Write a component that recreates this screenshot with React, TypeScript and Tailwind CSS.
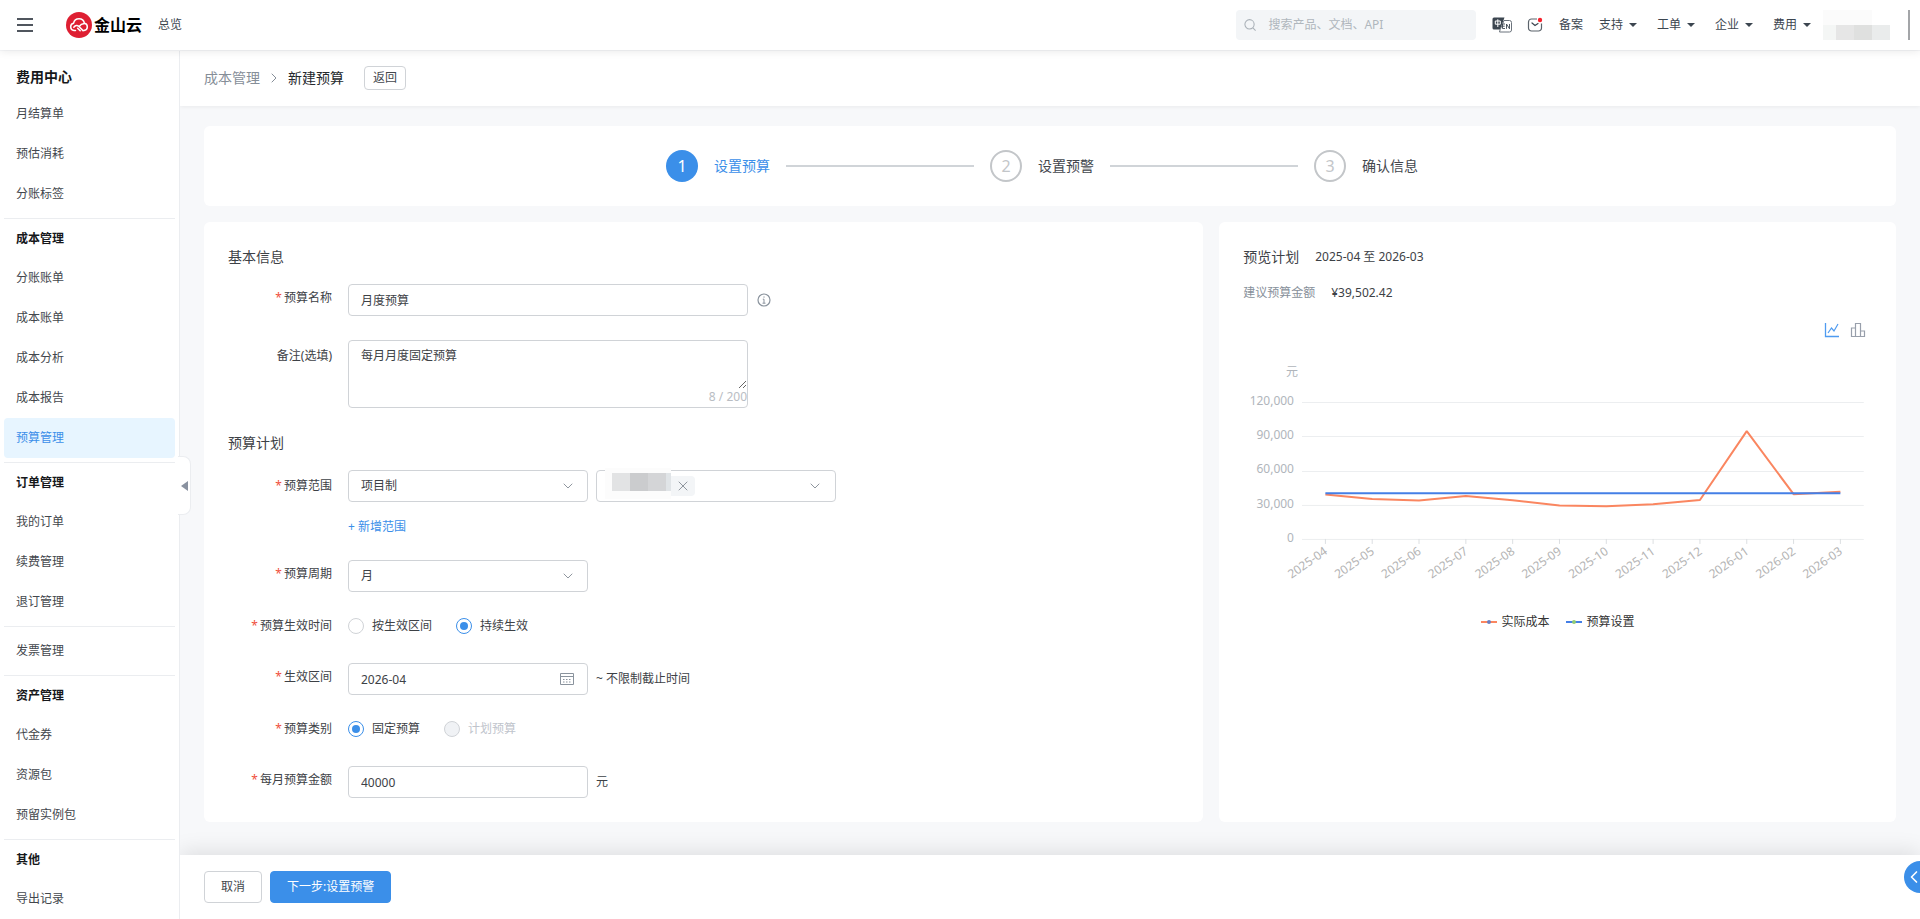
import { useState } from 'react';
import type { ReactNode } from 'react';
import { ChevronDown, ChevronLeft, ChevronRight, X } from 'lucide-react';
import clsx from 'clsx';

interface MenuGroup {
  title?: string;
  items: string[];
}

const MENU_GROUPS: MenuGroup[] = [
  { title: '成本管理', items: ['分账账单', '成本账单', '成本分析', '成本报告', '预算管理'] },
  { title: '订单管理', items: ['我的订单', '续费管理', '退订管理'] },
  { items: ['发票管理'] },
  { title: '资产管理', items: ['代金券', '资源包', '预留实例包'] },
  { title: '其他', items: ['导出记录'] },
];

const TOP_ITEMS = ['月结算单', '预估消耗', '分账标签'];
const NAV_MENUS = ['支持', '工单', '企业', '费用'];
const STEPS = ['设置预算', '设置预警', '确认信息'];

const BUDGET = 40000;
const COSTS = [
  { month: '2025-04', value: 38900 },
  { month: '2025-05', value: 34900 },
  { month: '2025-06', value: 33700 },
  { month: '2025-07', value: 37700 },
  { month: '2025-08', value: 34000 },
  { month: '2025-09', value: 29300 },
  { month: '2025-10', value: 28700 },
  { month: '2025-11', value: 30400 },
  { month: '2025-12', value: 34100 },
  { month: '2026-01', value: 94500 },
  { month: '2026-02', value: 39200 },
  { month: '2026-03', value: 41300 },
];

function Logo() {
  return (
    <svg viewBox="0 0 26 26" className="h-[26px] w-[26px]" aria-hidden="true">
      <circle cx="13" cy="13" r="13" fill="#de1f32" />
      <path
        d="M9.500 18.500H8a3.700 3.700 0 0 1-.4-7.300 5.500 5.500 0 0 1 10.800 0 3.700 3.700 0 0 1-.4 7.300h-.8M7.800 15.200c1.600-2 3.600-2.200 5.400-.4l3.800 3.800M18 11.800c-2-.2-3.400.8-4.600 2.400M11.600 16.200l2.600 2.600"
        fill="none"
        stroke="#fff"
        strokeWidth="1.500"
        strokeLinecap="round"
        strokeLinejoin="round"
      />
    </svg>
  );
}

function LanguageIcon() {
  return (
    <svg viewBox="0 0 20 16" className="h-4 w-5" aria-hidden="true">
      <path d="M2 .5h10.500L8.200 12.500H2A1.500 1.500 0 0 1 .5 11V2A1.500 1.500 0 0 1 2 .5z" fill="#3c4650" />
      <path d="M3.300 4h5v3.200h-5zM5.800 2.300V10" fill="none" stroke="#fff" strokeWidth="1" />
      <path d="M12 3.500h5.500A2 2 0 0 1 19.500 5.500v7.500a2 2 0 0 1-2 2H7.500L8.200 12.500z" fill="#fff" stroke="#6b737c" strokeWidth="1" />
      <path d="M13 7h-2.500v4.500H13M10.500 9.200h2.200M14.500 11.800V7l3 4.800V7" fill="none" stroke="#3c4650" strokeWidth=".9" />
    </svg>
  );
}

function MessageIcon() {
  return (
    <svg viewBox="0 0 16 16" className="h-4 w-4" aria-hidden="true">
      <path d="M10 2H4.500A3 3 0 0 0 1.500 5v6a3 3 0 0 0 3 3h7a3 3 0 0 0 3-3V6.500" fill="none" stroke="#5b636b" strokeWidth="1.200" />
      <path d="M5 6l3 2.500L11 6.500" fill="none" stroke="#3c4650" strokeWidth="1.200" strokeLinecap="round" />
      <circle cx="13" cy="3" r="2.200" fill="#f5222d" />
    </svg>
  );
}

function Header() {
  return (
    <header className="relative z-20 flex h-[50px] shrink-0 items-center bg-white pr-[10px] pl-4 shadow-[0_2px_8px_rgba(0,0,0,0.08)]">
      <button type="button" aria-label="菜单" className="flex h-4 w-[17px] flex-col justify-between py-px pl-px">
        <span className="h-[2px] w-full bg-[#50565e]" />
        <span className="h-[2px] w-full bg-[#50565e]" />
        <span className="h-[2px] w-full bg-[#50565e]" />
      </button>
      <a href="#" className="ml-[33px] flex items-center gap-[2px]">
        <Logo />
        <span className="text-base font-bold text-black">金山云</span>
      </a>
      <a href="#" className="ml-4 text-xs text-[#3c4650]">总览</a>

      <div className="ml-auto flex items-center">
        <label className="flex h-[30px] w-60 items-center gap-3 rounded bg-[#f3f5f7] px-2">
          <svg viewBox="0 0 14 14" className="h-[14px] w-[14px]" fill="none" stroke="#a9b0b7" strokeWidth="1.200">
            <circle cx="6.200" cy="6.200" r="5.200" />
            <path d="M10 10.200l3 3" />
          </svg>
          <input
            type="search"
            aria-label="搜索"
            placeholder="搜索产品、文档、API"
            className="w-full bg-transparent text-xs outline-none placeholder:text-[#b0b7bd]"
          />
        </label>
        <button type="button" aria-label="切换语言" className="ml-4"><LanguageIcon /></button>
        <button type="button" aria-label="消息" className="ml-[15px]"><MessageIcon /></button>
        <a href="#" className="ml-4 text-xs text-[#3c4650]">备案</a>
        <nav className="ml-4 flex items-center gap-5">
          {NAV_MENUS.map(menu => (
            <button key={menu} type="button" className="flex items-center gap-[6px] text-xs text-[#3c4650]">
              {menu}
              <span className="border-x-4 border-t-4 border-x-transparent border-t-[#3c4650]" />
            </button>
          ))}
        </nav>
        {/* masked account name */}
        <div className="ml-3 flex h-[30px] w-[67px] flex-col" aria-hidden="true">
          <div className="flex flex-1">
            <span className="w-[49px] bg-[#fbfbfb]" />
          </div>
          <div className="flex flex-1">
            <span className="w-[13px] bg-[#f4f6f5]" />
            <span className="w-[18px] bg-[#e6e6e6]" />
            <span className="w-[18px] bg-[#dfe0df]" />
            <span className="w-[18px] bg-[#eaecec]" />
          </div>
        </div>
        <span className="ml-[18px] h-[30px] w-[2px] bg-[#a3a5a8]" />
      </div>
    </header>
  );
}

function MenuItem({ label, active }: { label: string; active?: boolean }) {
  return (
    <a
      href="#"
      className={clsx(
        'flex h-10 items-center rounded px-3 text-xs',
        active ? 'bg-[#e7f5ff] text-[#3b8fe9]' : 'text-[#43474d]'
      )}
    >
      {label}
    </a>
  );
}

function Sidebar() {
  return (
    <aside className="relative z-10 w-[180px] shrink-0 border-r border-[#ebedf0] bg-white">
      <nav className="h-full overflow-y-auto pr-1 pl-1 [scrollbar-width:none]">
        <h2 className="px-3 pt-4 pb-2 text-sm leading-[19px] font-bold text-[#16181b]">费用中心</h2>
        <div className="pb-1">
          {TOP_ITEMS.map(item => <MenuItem key={item} label={item} />)}
        </div>
        {MENU_GROUPS.map((group, i) => (
          <div key={i} className={clsx('border-t border-[#ebedf0]', i < MENU_GROUPS.length - 1 && 'pb-1', !group.title && 'pt-1')}>
            {group.title && (
              <h3 className="px-3 text-xs leading-[39px] font-bold text-[#16181b]">{group.title}</h3>
            )}
            {group.items.map(item => (
              <MenuItem key={item} label={item} active={item === '预算管理'} />
            ))}
          </div>
        ))}
      </nav>
      <button
        type="button"
        aria-label="收起侧栏"
        className="absolute top-[405px] -right-3 flex h-[59px] w-[13px] items-center justify-center rounded-r-lg border border-l-0 border-[#ebedf0] bg-white"
      >
        <span className="border-y-[5px] border-r-[7px] border-y-transparent border-r-[#8a92a0]" />
      </button>
    </aside>
  );
}

function Steps({ current }: { current: number }) {
  return (
    <ol className="flex h-20 items-center justify-center rounded-md bg-white">
      {STEPS.map((step, i) => (
        <li key={step} className="mr-4 flex items-center gap-4">
          <span
            className={clsx(
              'flex h-8 w-8 items-center justify-center rounded-full text-base',
              i === current ? 'bg-[#3b8fe9] text-white' : 'border-2 border-[#c3c6c9] text-[#c3c6c9]'
            )}
          >
            {i + 1}
          </span>
          <span className={clsx('text-sm', i === current ? 'text-[#3b8fe9]' : 'text-[#43474d]')}>{step}</span>
          {i < STEPS.length - 1 && <span className="h-[2px] w-[188px] bg-[#d0d4d8]" />}
        </li>
      ))}
    </ol>
  );
}

interface FieldProps {
  label: string;
  htmlFor?: string;
  required?: boolean;
  className?: string;
  labelClass?: string;
  children: ReactNode;
}

function Field({ label, htmlFor, required, className, labelClass = 'leading-7', children }: FieldProps) {
  return (
    <div className={clsx('flex items-start gap-4 text-xs text-[#3d4146]', className)}>
      <label htmlFor={htmlFor} className={clsx('w-[104px] shrink-0 text-right', labelClass)}>
        {required && <span className="mr-[2px] text-[#f0503c]">*</span>}
        {label}
      </label>
      {children}
    </div>
  );
}

function Select({ id, options }: { id: string; options: string[] }) {
  return (
    <div className="relative w-60">
      <select id={id} className="h-8 w-full appearance-none rounded border border-[#d0d3d7] bg-white px-3 text-xs outline-none">
        {options.map(o => <option key={o}>{o}</option>)}
      </select>
      <ChevronDown className="pointer-events-none absolute top-2 right-3 h-4 w-4 text-[#8f969e]" strokeWidth={1.5} />
    </div>
  );
}

interface RadioProps {
  name: string;
  label: string;
  checked: boolean;
  disabled?: boolean;
  onChange?: () => void;
}

function Radio({ name, label, checked, disabled, onChange }: RadioProps) {
  return (
    <label className={clsx('flex items-center gap-2', disabled && 'text-[#c0c4cc]')}>
      <span className="relative flex h-4 w-4 items-center justify-center">
        <input
          type="radio"
          name={name}
          checked={checked}
          disabled={disabled}
          onChange={() => onChange?.()}
          className="h-4 w-4 appearance-none rounded-full border border-[#d0d3d7] bg-white checked:border-[#3b8fe9] disabled:bg-[#f0f2f5]"
        />
        {checked && <span className="absolute h-2 w-2 rounded-full bg-[#3b8fe9]" />}
      </span>
      {label}
    </label>
  );
}

function BudgetForm() {
  const [name, setName] = useState('月度预算');
  const [remark, setRemark] = useState('每月月度固定预算');
  const [period, setPeriod] = useState('continuous');
  const [month, setMonth] = useState('2026-04');
  const [amount, setAmount] = useState('40000');

  return (
    <form className="min-w-0 flex-1 rounded-md bg-white p-6">
      <h3 className="text-sm leading-[22px] text-[#3d4146]">基本信息</h3>
      <Field label="预算名称" htmlFor="name" required className="mt-4">
        <div className="flex items-center gap-[9px]">
          <input
            id="name"
            value={name}
            onChange={e => setName(e.target.value)}
            className="h-8 w-[400px] rounded border border-[#d0d3d7] px-3 outline-none"
          />
          <svg viewBox="0 0 14 14" className="h-[14px] w-[14px]" fill="none" stroke="#8a939d">
            <circle cx="7" cy="7" r="6" strokeWidth="1.200" />
            <path d="M5.800 6.200H7v4M5.500 10.200h3M7 3.400v1.300" />
          </svg>
        </div>
      </Field>
      <Field label="备注(选填)" htmlFor="remark" className="mt-6" labelClass="leading-8">
        <div className="h-[68px] w-[400px] rounded border border-[#d0d3d7]">
          <textarea
            id="remark"
            value={remark}
            maxLength={200}
            onChange={e => setRemark(e.target.value)}
            className="block h-12 w-full resize-y px-3 py-[6px] leading-[18px] outline-none"
          />
          <p className="text-right leading-4 text-[#b9bdc3]">{remark.length} / 200</p>
        </div>
      </Field>

      <h3 className="mt-6 text-sm leading-[22px] text-[#3d4146]">预算计划</h3>
      <Field label="预算范围" htmlFor="scope" required className="mt-4" labelClass="leading-8">
        <div>
          <div className="flex gap-2">
            <Select id="scope" options={['项目制', '产品线']} />
            <div className="relative flex h-8 w-60 items-center rounded border border-[#d0d3d7] bg-white">
              {/* masked project tag */}
              <div className="absolute -top-[3px] left-2 flex h-[31px] w-[66px] bg-[#fcfcfc] pt-[5px] pb-2 pl-[7px]" aria-hidden="true">
                <span className="w-[18px] bg-[#e2e3e4]" />
                <span className="w-[18px] bg-[#cbccce]" />
                <span className="w-[18px] bg-[#d4d5d7]" />
                <span className="w-[5px] bg-[#e0e4e7]" />
              </div>
              <button type="button" aria-label="移除项目" className="ml-[74px] flex h-5 w-6 items-center justify-center rounded-r bg-[#f3f5f7]">
                <X className="h-4 w-4 text-[#8f969e]" strokeWidth={1.5} />
              </button>
              <button type="button" aria-label="选择项目" className="mr-3 ml-auto">
                <ChevronDown className="h-4 w-4 text-[#8f969e]" strokeWidth={1.5} />
              </button>
            </div>
          </div>
          <button type="button" className="mt-4 block leading-[18px] text-[#3b8fe9]">+ 新增范围</button>
        </div>
      </Field>
      <Field label="预算周期" htmlFor="cycle" required className="mt-6">
        <Select id="cycle" options={['月', '季度', '年']} />
      </Field>
      <Field label="预算生效时间" required className="mt-6" labelClass="leading-[19px]">
        <div className="flex h-[19px] items-center gap-6">
          <Radio name="period" label="按生效区间" checked={period === 'range'} onChange={() => setPeriod('range')} />
          <Radio name="period" label="持续生效" checked={period === 'continuous'} onChange={() => setPeriod('continuous')} />
        </div>
      </Field>
      <Field label="生效区间" htmlFor="month" required className="mt-7">
        <div className="flex items-center gap-2">
          <div className="relative w-60">
            <input
              id="month"
              value={month}
              onChange={e => setMonth(e.target.value)}
              className="h-8 w-full rounded border border-[#d0d3d7] px-3 outline-none"
            />
            <svg viewBox="0 0 14 12" className="pointer-events-none absolute top-[10px] right-[14px] h-3 w-[14px]" fill="none" stroke="#8a939d">
              <path d="M.5 .5h13v11H.5zM.5 3.500h13" />
              <path d="M3 6.500h8.500M3 9h8.500" strokeDasharray="1.500 1.500" />
            </svg>
          </div>
          <span>~ 不限制截止时间</span>
        </div>
      </Field>
      <Field label="预算类别" required className="mt-6" labelClass="leading-[19px]">
        <div className="flex h-[19px] items-center gap-6">
          <Radio name="type" label="固定预算" checked />
          <Radio name="type" label="计划预算" checked={false} disabled />
        </div>
      </Field>
      <Field label="每月预算金额" htmlFor="amount" required className="mt-7">
        <div className="flex items-center gap-2">
          <input
            id="amount"
            value={amount}
            onChange={e => setAmount(e.target.value)}
            className="h-8 w-60 rounded border border-[#d0d3d7] px-3 outline-none"
          />
          <span>元</span>
        </div>
      </Field>
    </form>
  );
}

function CostChart() {
  const left = 59;
  const right = 621;
  const base = 183;
  const step = (right - left) / COSTS.length;
  const x = (i: number) => left + step * (i + 0.5);
  const y = (value: number) => base - (value / 120000) * 137;
  const points = COSTS.map((c, i) => `${x(i)},${y(c.value)}`).join(' ');

  return (
    <svg viewBox="0 0 629 236" className="mt-2 w-full" fontSize="12">
      <text x="49" y="20" textAnchor="middle" fill="#b0b5bb">元</text>
      {[0, 30000, 60000, 90000, 120000].map(tick => (
        <g key={tick}>
          <line x1={left} x2={right} y1={Math.round(y(tick)) + 0.5} y2={Math.round(y(tick)) + 0.5} stroke="#eceef0" />
          <text x="51" y={y(tick) + 3} textAnchor="end" fill="#b0b5bb">{tick.toLocaleString('en-US')}</text>
        </g>
      ))}
      {COSTS.map((c, i) => (
        <g key={c.month}>
          <line x1={x(i)} x2={x(i)} y1={base} y2={base + 5} stroke="#dcdfe2" />
          <text x={x(i)} y={base + 15} textAnchor="end" fill="#b4b4b4" transform={`rotate(-35 ${x(i)} ${base + 10})`}>
            {c.month}
          </text>
        </g>
      ))}
      <polyline points={points} fill="none" stroke="#fa8660" strokeWidth="2" strokeLinejoin="bevel" />
      <line x1={x(0)} x2={x(COSTS.length - 1)} y1={y(BUDGET)} y2={y(BUDGET)} stroke="#447fe6" strokeWidth="2" />
    </svg>
  );
}

function PreviewPanel() {
  return (
    <section className="w-2/5 shrink-0 rounded-md bg-white p-6">
      <div className="flex items-center gap-4 leading-[22px] text-[#3d4146]">
        <h3 className="text-sm leading-[22px]">预览计划</h3>
        <span className="text-xs">2025-04 至 2026-03</span>
      </div>
      <div className="mt-4 flex items-center gap-4 text-xs leading-[18px]">
        <span className="text-[#87909a]">建议预算金额</span>
        <span className="text-[#3d4146]">¥39,502.42</span>
      </div>
      <div className="mt-5 mr-[5px] flex justify-end gap-2">
        <button type="button" aria-label="折线图" className="px-px pb-[2px]">
          <svg viewBox="0 0 16 16" className="h-4 w-4" fill="none" stroke="#4f9bf0">
            <path d="M1.500 1v13.500H15" strokeWidth="1.300" />
            <path d="M4 11l3.500-5 2.500 3 4-7" strokeWidth="1.200" />
          </svg>
        </button>
        <button type="button" aria-label="柱状图" className="px-px pb-[2px]">
          <svg viewBox="0 0 16 16" className="h-4 w-4" fill="none" stroke="#989fab" strokeWidth="1.200">
            <path d="M1.500 6h4v8.500h-4zM5.500 1.500h5v13h-5zM10.500 9h4v5.500h-4z" />
          </svg>
        </button>
      </div>
      <div className="mt-4">
        <CostChart />
      </div>
      <div className="mt-[22px] flex justify-center gap-4 text-xs text-[#333]">
        <span className="flex items-center gap-[5px]">
          <span className="flex h-[2px] w-4 items-center justify-center bg-[#fa8660]">
            <span className="h-1 w-1 rounded-full bg-[#6b7fc0]" />
          </span>
          实际成本
        </span>
        <span className="flex items-center gap-[5px]">
          <span className="flex h-[2px] w-4 items-center justify-center bg-[#447fe6]">
            <span className="h-1 w-1 rounded-full bg-[#91cc75]" />
          </span>
          预算设置
        </span>
      </div>
    </section>
  );
}

export default function App() {
  return (
    <div className="flex h-screen flex-col bg-[#f7f8fa] font-['Noto_Sans','Noto_Sans_CJK_SC',sans-serif]">
      <Header />
      <div className="flex min-h-0 flex-1 pt-px">
        <Sidebar />
        <div className="relative flex min-w-0 flex-1 flex-col">
          <div className="z-[5] flex h-[55px] shrink-0 items-center bg-white px-6 pb-[2px] text-sm shadow-[0_1px_4px_rgba(0,0,0,0.06)]">
            <a href="#" className="text-[#868e98]">成本管理</a>
            <ChevronRight className="mx-[6px] h-4 w-4 text-[#868e98]" strokeWidth={1.5} />
            <span className="text-[#25282c]">新建预算</span>
            <button type="button" className="ml-5 h-6 w-[42px] rounded border border-[#d0d3d7] bg-white text-xs text-[#43474d]">
              返回
            </button>
          </div>

          <main className="flex-1 overflow-y-auto px-6 pt-5 pb-6">
            <Steps current={0} />
            <div className="mt-4 flex gap-4">
              <BudgetForm />
              <PreviewPanel />
            </div>
          </main>

          <footer className="z-[5] flex h-16 shrink-0 items-center gap-2 bg-white px-6 text-xs shadow-[0_-4px_20px_rgba(0,0,0,0.1)]">
            <button type="button" className="h-8 rounded border border-[#d0d3d7] bg-white px-4 text-[#43474d]">取消</button>
            <button type="button" className="h-8 rounded border border-[#3b8fe9] bg-[#3b8fe9] px-4 text-white">下一步:设置预警</button>
          </footer>
        </div>
      </div>
      <button
        type="button"
        aria-label="展开助手"
        className="fixed right-0 bottom-[26px] z-30 flex h-8 w-4 items-center overflow-hidden rounded-l-full bg-[#3b8fe9]"
      >
        <ChevronLeft className="h-5 w-5 shrink-0 text-white" strokeWidth={2} />
      </button>
    </div>
  );
}
